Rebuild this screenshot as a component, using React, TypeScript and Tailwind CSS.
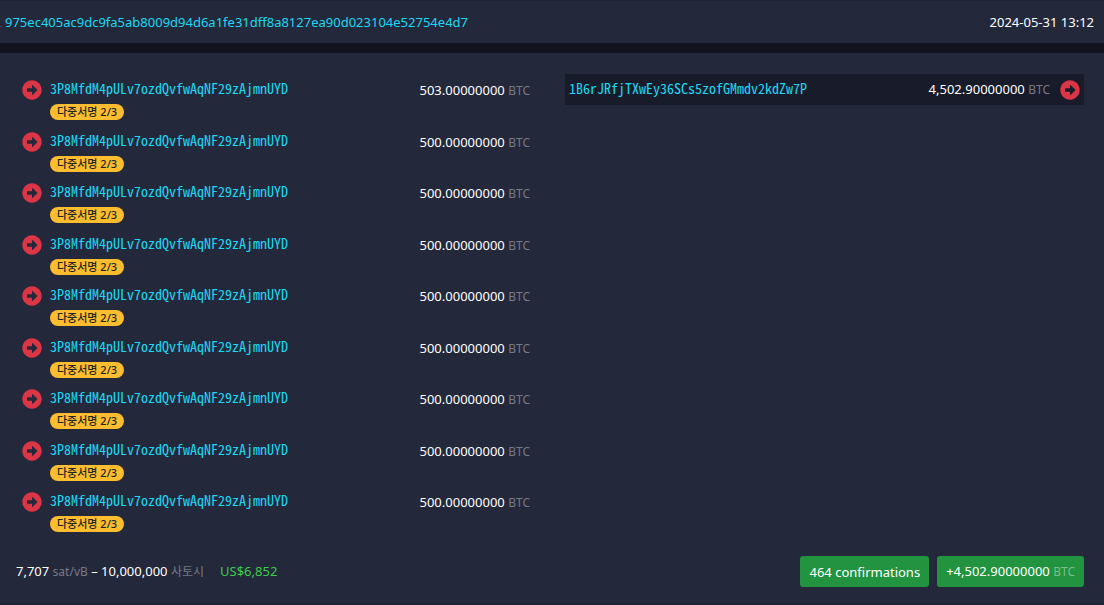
import React from "react";
import { FaArrowAltCircleRight } from "react-icons/fa";

type Input = { address: string; amount: string };

const SOURCE = "3P8MfdM4pULv7ozdQvfwAqNF29zAjmnUYD";

const inputs: Input[] = [
  { address: SOURCE, amount: "503.00000000" },
  ...Array.from({ length: 8 }, () => ({ address: SOURCE, amount: "500.00000000" })),
];

const linkClass = "text-[#1bd8f4] hover:underline";
const monoClass =
  "font-['Noto_Sans_Mono_CJK_KR','Liberation_Mono',monospace] text-[14px] leading-4";

function Amount({ value, unitClass = "text-[#777984]" }: { value: string; unitClass?: string }) {
  return (
    <span className="whitespace-nowrap">
      {value} <span className={`text-[12px] ${unitClass}`}>BTC</span>
    </span>
  );
}

function InputRow({ address, amount }: Input) {
  return (
    <li className="flex items-start">
      <a href="#source" aria-label="Source transaction" className="mt-1 mr-2 text-[#dc3545]">
        <FaArrowAltCircleRight size={20} />
      </a>
      <div className="flex flex-1 flex-col items-start">
        <a href="#address" className={`${linkClass} ${monoClass} mt-1`}>
          {address}
        </a>
        <span className="mt-2 flex h-4 items-center rounded-full bg-[#fdbd2f] px-[7px] text-[11px] leading-4 font-medium text-[#212529]">
          다중서명 2/3
        </span>
      </div>
      <span className="mt-[2px]">
        <Amount value={amount} />
      </span>
    </li>
  );
}

export default function App() {
  return (
    <div className="min-h-screen border-y border-[#1f2236] bg-[#24283b] font-['Noto_Sans','Noto_Sans_CJK_KR',sans-serif] text-[13px] leading-6 text-white">
      <header className="flex items-center justify-between border-b-10 border-[#11131f] pt-[9px] pr-[10px] pb-[9px] pl-[5px]">
        <a href="#transaction" className={linkClass}>
          975ec405ac9dc9fa5ab8009d94d6a1fe31dff8a8127ea90d023104e52754e4d7
        </a>
        <time dateTime="2024-05-31T13:12">2024-05-31 13:12</time>
      </header>

      <main className="px-5 pt-[21px]">
        <div className="grid grid-cols-2 items-start gap-[26px]">
          <ul className="grid min-h-[466px] auto-rows-fr pt-[2px] pr-[9px] pl-[2px]">
            {inputs.map((input, index) => (
              <InputRow key={index} {...input} />
            ))}
          </ul>
          <div className="flex h-[31px] items-center bg-[#181b2a] px-1">
            <a href="#recipient" className={`${linkClass} ${monoClass} pb-1`}>
              1B6rJRfjTXwEy36SCs5zofGMmdv2kdZw7P
            </a>
            <span className="mr-[10px] ml-auto">
              <Amount value="4,502.90000000" />
            </span>
            <a href="#spent" aria-label="Spending transaction" className="text-[#dc3545]">
              <FaArrowAltCircleRight size={20} />
            </a>
          </div>
        </div>

        <footer className="mt-4 -ml-1 flex items-center justify-between">
          <div>
            7,707 <span className="text-[12px] text-[#777984]">sat/vB</span> – 10,000,000{" "}
            <span className="text-[12px] text-[#777984]">사토시</span>
            <span className="ml-4 text-[#3bcc49]">US$6,852</span>
          </div>
          <div className="flex gap-2">
            <button type="button" className="h-[31px] rounded-[3px] bg-[#22933e] px-[9px]">
              464 confirmations
            </button>
            <button type="button" className="h-[31px] rounded-[3px] bg-[#22933e] px-[9px]">
              <Amount value="+4,502.90000000" unitClass="text-[#7abe8b]" />
            </button>
          </div>
        </footer>
      </main>
    </div>
  );
}
